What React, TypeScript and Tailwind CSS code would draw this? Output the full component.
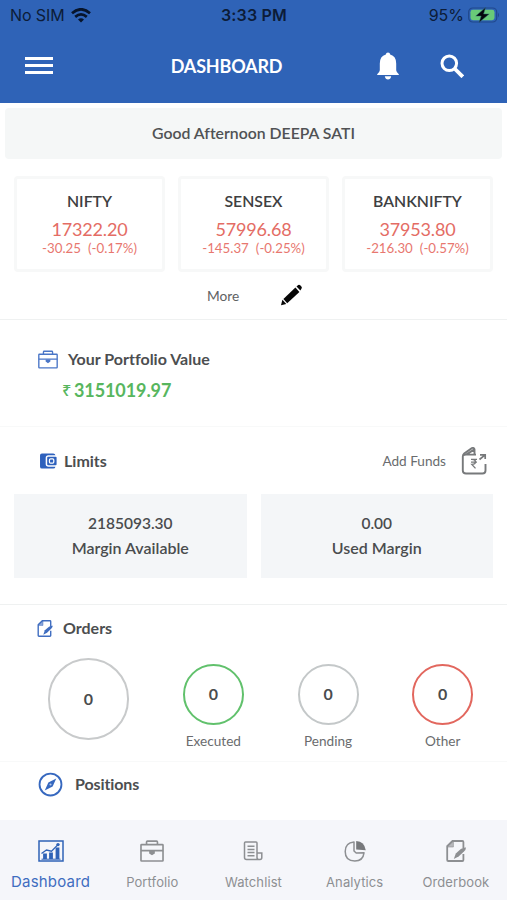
import React from "react";

const BLUE = "#2f63b7";

function Briefcase({ className }: { className: string }) {
  return (
    <svg viewBox="0 0 22 20" className={className} fill="none" stroke="currentColor" strokeWidth="1.5">
      <rect x="0.9" y="4.2" width="20.2" height="15" rx="0.6" />
      <path d="M6 4.2V1.7Q6 0.9 6.8 0.9H15.2Q16 0.9 16 1.7V4.2M0.8 9.6H21.2" />
      <path d="M8.4 10H13.6V12.2L11 14L8.4 12.2Z" fill="currentColor" stroke="none" />
    </svg>
  );
}

function NoteEdit({ className }: { className: string }) {
  return (
    <svg viewBox="0 0 20 22" className={className} fill="none" stroke="currentColor" strokeWidth="1.8">
      <path d="M17.4 8V2Q17.4 1 16.4 1H6.5L1.2 6.2V20Q1.2 21 2.2 21H16.4Q17.4 21 17.4 20V14" />
      <path d="M1.2 7H7.4V1Z" fill="currentColor" fillOpacity="0.6" strokeWidth="0.6" />
      <path d="M7.8 19L9.8 13.4L14.8 9Q17.2 7.2 20 7.4Q20 9.4 18 11.4L12.6 16.4Z" fill="currentColor" stroke="none" />
    </svg>
  );
}

function StatusBar() {
  return (
    <div className="flex h-[30px] items-center font-['Inter',sans-serif] text-[16px] text-[#0c1c38]">
      <div className="flex w-[190px] items-center gap-[7px] pl-[10px]">
        <span className="w-[54px] whitespace-nowrap tracking-[-0.1px]">No SIM</span>
        <svg viewBox="0 0 20 15" className="h-[15px] w-5" fill="none" stroke="#07142b" strokeWidth="2.7">
          <path d="M1 5.2Q10 -2.6 19 5.2" />
          <path d="M4.2 8.9Q10 4 15.8 8.9" />
          <path d="M7 11.4Q10 9.2 13 11.4L10 14.6Z" fill="#07142b" stroke="none" />
        </svg>
      </div>
      <div className="w-[128px] text-center font-semibold tracking-[0.2px]">3:33 PM</div>
      <div className="flex flex-1 items-center justify-end gap-[4px] pr-[7px]">
        <span>95%</span>
        <svg viewBox="0 0 32 16" className="h-4 w-8">
          <rect x="0.7" y="1" width="28" height="14" rx="4" fill="none" stroke="#20488c" strokeWidth="1.2" />
          <rect x="2.5" y="2.8" width="24" height="10.4" rx="2.4" fill="#69ca78" />
          <path d="M30 5.5Q32 8 30 10.5Z" fill="#20488c" />
          <path d="M17.5 0.6L7.8 9H13.2L11 15.4L21.2 7H15.6Z" fill="#04070c" stroke="#2f6a72" strokeWidth="0.5" />
        </svg>
      </div>
    </div>
  );
}

function Header() {
  return (
    <header className="h-[103px] shrink-0 bg-[#2f63b7]">
      <StatusBar />
      <div className="flex h-[71px] items-center text-white">
        <div className="flex w-[152px] flex-col gap-[4px] pl-[25px]">
          <div className="h-[3px] w-7 bg-white" />
          <div className="h-[3px] w-7 bg-white" />
          <div className="h-[3px] w-7 bg-white" />
        </div>
        <h1 className="w-[149px] pt-px text-center text-[18px] font-bold tracking-[-0.2px]">DASHBOARD</h1>
        <svg viewBox="0 0 22 28" className="ml-[76px] h-7 w-[22px]" fill="currentColor">
          <path d="M11 0.5Q13 0.5 13.2 2.6Q19.2 4.3 19.2 11.5V18.2Q19.4 20.3 21.8 22.2V23H0.2V22.2Q2.6 20.3 2.8 18.2V11.5Q2.8 4.3 8.8 2.6Q9 0.5 11 0.5Z" />
          <path d="M7.8 24.2H14.2Q13.5 27.5 11 27.5Q8.5 27.5 7.8 24.2Z" />
        </svg>
        <svg viewBox="0 0 24 24" className="ml-[41px] h-6 w-6" fill="none" stroke="currentColor">
          <circle cx="9.3" cy="9.3" r="7.3" strokeWidth="3" />
          <path d="M14.5 14.5L22.8 22.8" strokeWidth="3.8" />
        </svg>
      </div>
    </header>
  );
}

const indices = [
  { name: "NIFTY", value: "17322.20", change: "-30.25", pct: "(-0.17%)" },
  { name: "SENSEX", value: "57996.68", change: "-145.37", pct: "(-0.25%)" },
  { name: "BANKNIFTY", value: "37953.80", change: "-216.30", pct: "(-0.57%)" },
];

function Indices() {
  return (
    <section className="h-[161px] shrink-0 border-b border-[#eff1f1] pt-[17px]">
      <div className="flex gap-[13px] px-[14px]">
        {indices.map((i) => (
          <div key={i.name} className="flex h-[96px] w-[151px] flex-col items-center rounded-[4px] border-[3px] border-[#f7f8f8] pt-[10px] whitespace-nowrap">
            <div className="text-[15.8px] leading-6 font-semibold text-[#3e4041]">{i.name}</div>
            <div className="mt-[4px] text-[18px] leading-6 tracking-[-0.15px] text-[#e46c64]">{i.value}</div>
            <div className="flex gap-[7px] text-[13.3px] leading-[14px] text-[#e8776f]">
              <span>{i.change}</span>
              <span>{i.pct}</span>
            </div>
          </div>
        ))}
      </div>
      <div className="flex h-[46px] items-center pl-[207px] pt-[2px]">
        <span className="w-[73px] pt-px text-[13.7px] text-[#606263]">More</span>
        <svg viewBox="0 0 24 24" className="-mt-[2px] h-6 w-6" fill="#060606">
          <path d="M1 22.3L2.4 16.8L5.6 20.2L6.2 20.9Z" />
          <path d="M3.4 15.9L15.4 4.6L19.4 8.9L7.2 20.2Z" />
          <path d="M16.5 3.6L18.2 2Q19.2 1.2 20.2 2.2L21.4 3.4Q22.4 4.6 21.4 5.8L20.4 7.5Z" />
        </svg>
      </div>
    </section>
  );
}

function Portfolio() {
  return (
    <section className="h-[107px] shrink-0 border-b border-[#f8f9f9] pt-[27px]">
      <div className="flex h-6 items-center pl-[38px] text-[#4a76c7]">
        <Briefcase className="h-[19px] w-[20px]" />
        <h2 className="ml-[10px] text-[16px] font-bold text-[#4c4e50]">Your Portfolio Value</h2>
      </div>
      <div className="flex h-[38px] items-center pl-[62px] text-[18px] font-bold text-[#57b65e]">
        <span className="w-[12px] font-['Noto_Sans','Lato',sans-serif] text-[16.5px] font-medium">₹</span>
        <span className="tracking-[-0.1px]">3151019.97</span>
      </div>
    </section>
  );
}

function Limits() {
  return (
    <section className="h-[178px] shrink-0 border-b border-[#eff1f1] pt-[19px]">
      <div className="flex h-[30px] items-center pl-[40px]">
        <svg viewBox="0 0 18 17" className="h-[16px] w-[17px]">
          <path d="M2 0.5H14Q16 0.5 16.4 2.5H9Q6 2.5 6 5.3V11.7Q6 14.5 9 14.5H16.4Q16 16.5 14 16.5H2Q0 16.5 0 14.5V2.5Q0 0.5 2 0.5Z" fill="#2e61bd" />
          <rect x="7.6" y="4" width="10" height="9" rx="1" fill="#2e61bd" />
          <rect x="10" y="6.3" width="4.6" height="4.4" rx="1.2" fill="none" stroke="#fff" strokeWidth="1.3" />
        </svg>
        <h2 className="ml-[7px] text-[16px] font-bold text-[#4c4e50]">Limits</h2>
        <span className="ml-auto text-[13.6px] text-[#6a6c6e]">Add Funds</span>
        <svg viewBox="0 0 26 28" className="mr-[20px] ml-[15px] h-7 w-[26px]" fill="none" stroke="#77797b" strokeWidth="1.9">
          <path d="M24.5 17V23.5Q24.5 26.5 21.5 26.5H5Q1.8 26.5 1.8 23.5V9.5Q1.8 7.7 3.2 6.4L10.8 1.1Q13.2 0.4 13.5 2.4V7.6H5.2L13 2.6M2.2 8.3Q3 7.6 5 7.6H15" />
          <path d="M18.5 12.5L23.8 8.2M19 7.8H24.2V12" strokeWidth="1.7" />
          <path d="M10 12.4H16M10 15.2H16M11 12.4Q14.5 12.4 14.5 14.8Q14.5 17.4 10.8 17.4L14.5 21.4" strokeWidth="1.3" />
        </svg>
      </div>
      <div className="mt-[18px] flex gap-[14px] px-[14px]">
        {[["2185093.30", "Margin Available"], ["0.00", "Used Margin"]].map(([v, l]) => (
          <div key={l} className="flex h-[84px] flex-1 flex-col items-center bg-[#f4f6f8] pt-[17px] text-[16px] font-semibold text-[#4a4c4e]">
            <span className="text-[15.5px] leading-[25px]">{v}</span>
            <span className="leading-6">{l}</span>
          </div>
        ))}
      </div>
    </section>
  );
}

const orders = [
  { label: "Executed", ring: "border-[#61c16c]" },
  { label: "Pending", ring: "border-[#c4c8c9]" },
  { label: "Other", ring: "border-[#e2675e]" },
];

function Orders() {
  return (
    <section className="h-[157px] shrink-0 border-b border-[#f8f9f9] pt-[10px]">
      <div className="flex h-[26px] items-center pl-[37px] text-[#3f6dc0]">
        <NoteEdit className="h-[17px] w-[16px]" />
        <h2 className="ml-[10px] text-[16px] font-bold text-[#4c4e50]">Orders</h2>
      </div>
      <div className="flex pt-[17px] pl-[48px]">
        <div className="flex h-[82px] w-[81px] items-center justify-center rounded-full border-2 border-[#c8cacb] text-[16px] font-bold text-[#4a4c4e]">0</div>
        <div className="ml-[27px] flex pt-[6px]">
          {orders.map((o) => (
            <div key={o.label} className="flex w-[114.7px] flex-col items-center">
              <div className={"flex h-[61px] w-[61px] items-center justify-center rounded-full border-2 pb-px text-[16px] font-bold text-[#4a4c4e] " + o.ring}>0</div>
              <span className="mt-[6px] text-[13.6px] leading-5 text-[#6a6c6e]">{o.label}</span>
            </div>
          ))}
        </div>
      </div>
    </section>
  );
}

function Positions() {
  return (
    <section className="flex h-[58px] shrink-0 items-start pt-[10px] pl-[38px]">
      <svg viewBox="0 0 26 26" className="h-[25px] w-[25px]">
        <circle cx="13" cy="13" r="11.4" fill="none" stroke="#3668bf" strokeWidth="1.9" />
        <path d="M19 6.7L15.2 15.2L7 19.3L10.8 10.8Z" fill="#3668bf" />
        <circle cx="13" cy="13" r="1.1" fill="#b9cbea" />
      </svg>
      <h2 className="ml-[12px] text-[16px] leading-6 font-bold tracking-[-0.1px] text-[#4c4e50]">Positions</h2>
    </section>
  );
}

function TabBar() {
  const tab = "flex w-[101.2px] flex-col items-center text-[13px]";
  return (
    <nav className="flex h-20 shrink-0 bg-[#f5f6fa] font-['Inter',sans-serif] text-[#8d8f92]">
      <div className={tab + " pt-[20px] text-[#3f6dc0]"}>
        <svg viewBox="0 0 26 22" className="h-[22px] w-[26px]" fill="none" stroke={BLUE}>
          <rect x="1" y="1" width="24" height="20" strokeWidth="1.5" />
          <path d="M7 19V13.5M13 19V12.5M19.5 19V7.5" strokeWidth="3.8" />
          <path d="M3.5 19.2H22.5" strokeWidth="1" />
          <path d="M3.5 13.5L8.5 10L13.5 11.2L20 4.6" strokeWidth="1.3" />
          <circle cx="20" cy="4.6" r="1.7" fill={BLUE} stroke="none" />
        </svg>
        <span className="mt-[9px] text-[15px] leading-[22px] tracking-[0.2px]">Dashboard</span>
      </div>
      <div className={tab + " pt-[20px] pl-px"}>
        <Briefcase className="h-[22px] w-[24px]" />
        <span className="mt-[10px] leading-[21px] tracking-[0.1px]">Portfolio</span>
      </div>
      <div className={tab + " pt-[20px] pl-px"}>
        <svg viewBox="0 0 20 22" className="h-[22px] w-5" fill="none" stroke="currentColor" strokeWidth="1.5">
          <path d="M14 13V3Q14 2 13 2H2.5Q1.5 2 1.5 3V17.5Q1.5 19.5 3.5 19.5H17Q18.8 19.5 18.8 17.5V13H14V17.5Q14 19.5 16 19.5" />
          <path d="M4.5 6.2H11.5M4.5 9.4H11.5M4.5 12.6H11.5M4.5 15.8H11.5" />
        </svg>
        <span className="mt-[10px] leading-[21px] tracking-[0.1px]">Watchlist</span>
      </div>
      <div className={tab + " pt-[20px] pl-px"}>
        <svg viewBox="0 0 22 22" className="h-[22px] w-[22px]" fill="none" stroke="currentColor" strokeWidth="1.5">
          <path d="M10 2Q1.2 2.8 1.2 11.5Q1.2 21 10.8 21Q19 21 20 12.8L12.2 13L10 11Z" strokeLinejoin="round" />
          <path d="M12.2 1Q20.5 1.5 21.8 10.3L12.2 9.6Z" fill="#77797c" stroke="none" />
        </svg>
        <span className="mt-[10px] leading-[21px] tracking-[0.1px]">Analytics</span>
      </div>
      <div className={tab + " pt-[20px] pl-px"}>
        <NoteEdit className="h-[22px] w-5" />
        <span className="mt-[10px] leading-[21px] tracking-[0.1px]">Orderbook</span>
      </div>
    </nav>
  );
}

export default function App() {
  return (
    <div className="flex h-[900px] w-[507px] flex-col overflow-hidden bg-white font-['Lato',sans-serif] [font-variant-ligatures:none]">
      <Header />
      <div className="mx-[5px] mt-[5px] flex h-[51px] shrink-0 items-center justify-center rounded-[4px] bg-[#f5f7f7] pb-[2px] text-[15.8px] font-semibold text-[#505254]">
        Good Afternoon DEEPA SATI
      </div>
      <Indices />
      <Portfolio />
      <Limits />
      <Orders />
      <Positions />
      <TabBar />
    </div>
  );
}
